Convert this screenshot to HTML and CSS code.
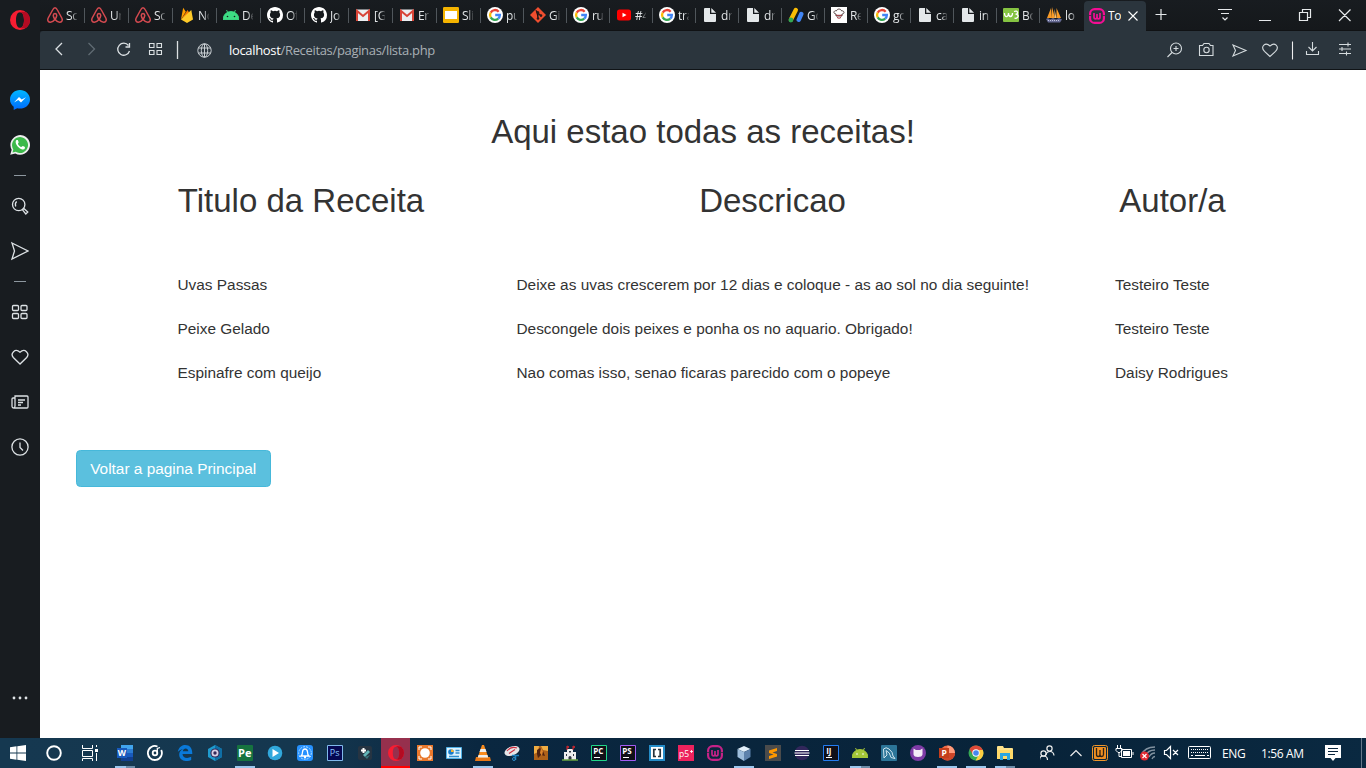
FILE: index.html
```html
<!DOCTYPE html>
<html lang="pt">
<head>
<meta charset="utf-8">
<title>Todas as receitas</title>
<link rel="stylesheet" href="styles.css">
</head>
<body>
<svg class="defs" aria-hidden="true">
  <symbol id="airbnb" viewBox="0 0 16 16"><path d="M8 .8C6.700.8 6.200 1.800 5.600 3L1.200 11c-1.200 2.500.2 4.200 2.200 4.200 1.700 0 3.500-1.400 4.600-2.900 2-2.300 2.600-5.500 0-5.700-2.600.2-2 3.400 0 5.700 1.100 1.500 2.900 2.900 4.600 2.900 2 0 3.400-1.700 2.200-4.200L10.400 3C9.800 1.800 9.300.8 8 .8z" fill="none" stroke="#d44a50" stroke-width="1.500"/></symbol>
  <symbol id="firebase" viewBox="0 0 16 16"><path d="M2 12.500L4.200.8l2.600 4z" fill="#ffa000"/><path d="M2 12.500L8.600 3l2 3.500z" fill="#f57c00"/><path d="M2 12.500L12.300 3 14 12.500 8 16z" fill="#ffca28"/></symbol>
  <symbol id="android" viewBox="0 0 16 16"><path d="M0 12.500a8 8 0 0 1 16 0zM3.500 3l2 4M12.500 3l-2 4" fill="#3ddc84" stroke="#3ddc84" stroke-width=".9"/><circle cx="4.500" cy="9.500" r=".8" fill="#16191d"/><circle cx="11.500" cy="9.500" r=".8" fill="#16191d"/></symbol>
  <symbol id="github" viewBox="0 0 16 16"><path fill="#fff" d="M8 0C3.580 0 0 3.580 0 8c0 3.540 2.290 6.530 5.470 7.590.4.070.55-.17.55-.38 0-.19-.01-.82-.01-1.490-2.010.37-2.530-.49-2.690-.94-.09-.23-.48-.94-.82-1.130-.28-.15-.68-.52-.01-.53.630-.01 1.080.58 1.230.82.720 1.210 1.870.87 2.330.66.070-.52.280-.87.510-1.070-1.780-.2-3.640-.89-3.640-3.950 0-.87.310-1.590.82-2.150-.08-.2-.36-1.020.08-2.120 0 0 .67-.21 2.200.82a7.600 7.600 0 0 1 4 0c1.530-1.040 2.200-.82 2.200-.82.440 1.100.16 1.920.08 2.120.51.56.82 1.270.82 2.150 0 3.070-1.870 3.750-3.650 3.950.29.25.54.73.54 1.480 0 1.070-.01 1.930-.01 2.200 0 .21.15.46.55.38A8 8 0 0 0 16 8c0-4.420-3.580-8-8-8z"/></symbol>
  <symbol id="gmail" viewBox="0 0 16 16"><path d="M1 2.500h14v11.500H1z" fill="#eceff1"/><path d="M2 14V4l6 5 6-5v10" fill="none" stroke="#d84437" stroke-width="2"/></symbol>
  <symbol id="slides" viewBox="0 0 16 16"><rect width="16" height="16" rx="1.200" fill="#f5b400"/><path d="M2 4h12v8H2z" fill="#fff"/></symbol>
  <symbol id="google" viewBox="0 0 16 16"><circle cx="8" cy="8" r="8" fill="#fff"/><g fill="none" stroke-width="2.300"><path d="M11.700 4.700A4.900 4.900 0 0 0 3.700 5.600" stroke="#ea4335"/><path d="M3.700 5.600a4.900 4.900 0 0 0 0 4.800" stroke="#fbbc05"/><path d="M3.700 10.400a4.900 4.900 0 0 0 7.500 1.300" stroke="#34a853"/><path d="M11.200 11.700A4.900 4.900 0 0 0 12.900 8H8.200" stroke="#4285f4"/></g></symbol>
  <symbol id="git" viewBox="0 0 16 16"><path d="M8 0l8 8-8 8-8-8z" fill="#f04e2f"/><path d="M5.800 3.400L8 5.600V12M8 6l3 3" stroke="#291a1a" stroke-width="1.200"/><circle cx="8" cy="5.600" r="1.300" fill="#291a1a"/><circle cx="8" cy="11.500" r="1.300" fill="#291a1a"/><circle cx="11" cy="8.600" r="1.300" fill="#291a1a"/></symbol>
  <symbol id="youtube" viewBox="0 0 16 16"><rect x="1" y="2.500" width="14" height="11" rx="2.500" fill="#f00"/><path d="M6.500 5.700v4.600L10.500 8z" fill="#fff"/></symbol>
  <symbol id="doc" viewBox="0 0 16 16"><path d="M2 2q0-1 1-1h5v6h6v7q0 1-1 1H3q-1 0-1-1zM9.300 1L14 5.700H9.300z" fill="#e4e8ea"/></symbol>
  <symbol id="ads" viewBox="0 0 16 16"><g stroke-linecap="round" stroke-width="4.400"><path d="M7.800 3L3 12.500" stroke="#fbbc04"/><path d="M13.300 7L10.700 12.800" stroke="#4285f4"/></g><circle cx="2.900" cy="13" r="2.400" fill="#34a853"/></symbol>
  <symbol id="chef" viewBox="0 0 16 16"><path d="M0 0h16v16H0z" fill="#fff"/><path d="M5 7C1.500 6.500 3 3 5.500 3.800 6 1.500 10 1.500 10.500 3.800 13.500 3.500 14 7 11 7v2H5z" fill="#fff" stroke="#4a3635" stroke-width=".9"/><path d="M5 8.300h6M6 10.500q2 1.500 4 0" fill="none" stroke="#9b3038"/></symbol>
  <symbol id="w3" viewBox="0 0 16 16"><rect y="1" width="16" height="14" rx="1" fill="#85c442"/><path d="M1.500 6q0 4 2.500 3.500Q5.500 9 5.500 6q0 3.500 2 3.500T9.500 6M11 4.500q3-1 3.500.7.300 2-2 2 3 .3 2.500 2.500-.5 2-3.500 1.500" fill="none" stroke="#fff" stroke-width="1.300"/></symbol>
  <symbol id="boat" viewBox="0 0 16 16"><path d="M5 1v10H1zM6 0l3 11H5zM10.500 1L15 11h-4.500z" fill="#f99b27"/><path d="M8.500 2l2 9h-2z" fill="#fbc070"/><path d="M0 12l2-1 2 1.500L7 11l3 1.500 3-1.500 3 1.500-2 3H2z" fill="#656991"/><path d="M2 13.500h12" stroke="#c2c4df" stroke-dasharray="1 1"/></symbol>
  <symbol id="wamp" viewBox="0 0 16 16"><rect x="1.100" y="1.100" width="13.800" height="13.800" rx="4.500" fill="none" stroke="currentColor" stroke-width="2.200"/><path d="M5 5v4q0 1.800 1.500 1.800T8 9V6v3q0 1.800 1.500 1.800T11 9V5" fill="none" stroke="currentColor" stroke-width="1.700"/><path d="M0 7.500h2.500M13.500 7.500H16" stroke="#2b353d" stroke-width=".8"/></symbol>
  <symbol id="opera" viewBox="0 0 20 20"><path fill-rule="evenodd" fill="#f71d32" d="M10 0a10 10 0 1 0 0 20 10 10 0 0 0 0-20zM10 2.200c2.700 0 4 3.500 4 7.800s-1.300 7.800-4 7.800S6 14.300 6 10s1.300-7.800 4-7.800z"/><path d="M10 2.200c3-1 5-.3 6.700.4a10 10 0 0 1 0 14.800c-1.700.9-3.700 1.400-6.700.4 2.700 0 4-3.500 4-7.800s-1.300-7.800-4-7.800z" fill="#b30b22"/></symbol>
  <symbol id="heart" viewBox="0 0 18 18"><path d="M9 16L2.300 9.500C-1 5.500 4-.3 9 4.200c5-4.500 10 1.300 6.700 5.300z"/></symbol>
  <symbol id="send" viewBox="0 0 18 18"><path d="M1 1l16 8L1 17l2.500-8z"/></symbol>
  <symbol id="grid" viewBox="0 0 18 18"><rect x="1.500" y="2.500" width="6" height="5" rx="1"/><rect x="10" y="2.500" width="6" height="5" rx="1"/><rect x="1.500" y="10.500" width="6" height="5" rx="1"/><rect x="10" y="10.500" width="6" height="5" rx="1"/></symbol>
</svg>

<div class="screen">
  <div class="browser">
    <nav class="sidebar">
      <svg class="s-logo" width="20" height="20"><use href="#opera"/></svg>
      <svg class="s-item messenger" width="20" height="20" viewBox="0 0 20 20"><defs><linearGradient id="msg" x2="0" y2="1"><stop stop-color="#00b7ff"/><stop offset="1" stop-color="#006aff"/></linearGradient></defs><path d="M10 0C4.500 0 0 4.200 0 9.500c0 3 1.400 5.500 3.700 7.200V20l3.500-1.800c5.800 1.600 12.800-2 12.800-8.700C20 4.200 15.500 0 10 0z" fill="url(#msg)"/><path d="M4 12.500L9 7l2.700 2.600L16 7.300l-5 5.300L8.300 10z" fill="#fff"/></svg>
      <svg class="s-item" width="20" height="20" viewBox="0 0 20 20"><path d="M.2 19.800l1.500-5A9.800 9.800 0 1 1 5.300 18.400z" fill="#eee"/><path d="M2.500 17.500l.8-3.100a8 8 0 1 1 2.400 2.400z" fill="#3cb94a"/><path d="M6.500 5c-2 2 0 5.500 2.300 7.500 2.700 2.300 5.200 2.700 6 .9.700-1.500-.5-1.700-1.800-2.300-.8-.3-1.200 1.300-2 .9-1.200-.5-2.500-1.800-3-3-.3-.7 1-1.300.6-2L7.800 5z" fill="#fff"/></svg>
      <i class="s-line"></i>
      <svg class="s-item line-ico" width="18" height="18" viewBox="0 0 18 18"><circle cx="7.700" cy="7.500" r="6.200"/><path d="M4.700 9.500q-1-3.500 1-5M11.500 12.800l1.300-1.300 4 3.500-2 2z"/></svg>
      <svg class="s-item line-ico" width="18" height="18"><use href="#send"/></svg>
      <i class="s-line"></i>
      <svg class="s-item line-ico" width="18" height="18"><use href="#grid"/></svg>
      <svg class="s-item line-ico" width="18" height="18"><use href="#heart"/></svg>
      <svg class="s-item line-ico" width="18" height="18" viewBox="0 0 18 18"><path d="M4 3h12q1 0 1 1v10q0 1-1 1H3q-2 0-2-2V6q0-1 1-1h2zM4 5v8q0 2-1.500 2M7 7h7M7 9.500h5M7 12h3"/></svg>
      <svg class="s-item line-ico" width="18" height="18" viewBox="0 0 18 18"><circle cx="9" cy="9" r="8.100"/><path d="M9 4.500v5l3 3"/></svg>
      <svg class="s-more" width="18" height="4"><g fill="#dfe3e6"><circle cx="3" cy="2" r="1.400"/><circle cx="9" cy="2" r="1.400"/><circle cx="15" cy="2" r="1.400"/></g></svg>
    </nav>

    <div class="main">
      <div class="tabs">
        <div class="tab wide"><svg><use href="#airbnb"/></svg><span>Sc</span></div>
        <div class="tab wide"><svg><use href="#airbnb"/></svg><span>Un</span></div>
        <div class="tab wide"><svg><use href="#airbnb"/></svg><span>Sc</span></div>
        <div class="tab wide"><svg><use href="#firebase"/></svg><span>No</span></div>
        <div class="tab wide"><svg><use href="#android"/></svg><span>De</span></div>
        <div class="tab wide"><svg><use href="#github"/></svg><span>Of</span></div>
        <div class="tab wide"><svg><use href="#github"/></svg><span>Jo</span></div>
        <div class="tab wide"><svg><use href="#gmail"/></svg><span>[G</span></div>
        <div class="tab wide"><svg><use href="#gmail"/></svg><span>Er</span></div>
        <div class="tab wide"><svg><use href="#slides"/></svg><span>Sli</span></div>
        <div class="tab"><svg><use href="#google"/></svg><span>pu</span></div>
        <div class="tab"><svg><use href="#git"/></svg><span>Gi</span></div>
        <div class="tab"><svg><use href="#google"/></svg><span>ru</span></div>
        <div class="tab"><svg><use href="#youtube"/></svg><span>#4</span></div>
        <div class="tab"><svg><use href="#google"/></svg><span>tra</span></div>
        <div class="tab"><svg><use href="#doc"/></svg><span>dr</span></div>
        <div class="tab"><svg><use href="#doc"/></svg><span>dr</span></div>
        <div class="tab"><svg><use href="#ads"/></svg><span>Go</span></div>
        <div class="tab"><svg><use href="#chef"/></svg><span>Re</span></div>
        <div class="tab"><svg><use href="#google"/></svg><span>go</span></div>
        <div class="tab"><svg><use href="#doc"/></svg><span>ca</span></div>
        <div class="tab"><svg><use href="#doc"/></svg><span>in</span></div>
        <div class="tab"><svg><use href="#w3"/></svg><span>Bo</span></div>
        <div class="tab wide last"><svg><use href="#boat"/></svg><span>lo</span></div>
        <div class="tab active"><svg class="pink"><use href="#wamp"/></svg><span>To</span><svg class="close" viewBox="0 0 10 10"><path d="M.5.5l9 9m0-9l-9 9" stroke="#fff" stroke-width="1.100"/></svg></div>
        <svg class="controls" width="219" height="30" viewBox="0 0 219 30"><g fill="none" stroke="#e6e9eb" stroke-width="1.200"><path d="M9.500 14.500h11M15 9v11M72 9.500h14M75 13.500h8M76.500 17.500l2.500 2.500 2.500-2.500M113 20.500h12M153.500 12.500h8v8h-8zM156.500 12v-2.500h8v8h-3M193 9.500l11.500 11.500m0-11.500L193 21"/></g></svg>
      </div>

      <div class="toolbar">
        <svg class="nav" width="145" height="38" viewBox="0 0 145 38"><g fill="none" stroke="#dbe0e3" stroke-width="1.300"><path d="M22 12l-6 6 6 6"/><path d="M48.500 12l6 6-6 6" stroke="#606b73"/><path d="M88.500 14.500a6 6 0 1 0 1 5.500M89.500 12v4h-4"/><path d="M109.500 12.500h4.500v4h-4.500zM117 12.500h4.500v4H117zM109.500 19.500h4.500v4h-4.500zM117 19.500h4.500v4H117z" stroke-width="1.100"/><path d="M137.500 10v18"/></g></svg>
        <svg class="globe" width="15" height="15" viewBox="0 0 15 15"><g fill="none" stroke="#c9cfd3"><circle cx="7.500" cy="7.500" r="6.700"/><ellipse cx="7.500" cy="7.500" rx="3.200" ry="6.700"/><path d="M7.500 1v13M1.500 5h12M1.500 10h12"/></g></svg>
        <div class="url"><b>localhost</b>/Receitas/paginas/lista.php</div>
        <svg class="tools" width="196" height="38" viewBox="0 0 196 38"><g fill="none" stroke="#d5dbde" stroke-width="1.100"><circle cx="15" cy="17.500" r="5.500"/><path d="M11 21.500L6.500 26M12.500 17.500h5M15 15v5M38.500 14.500h3l1.500-2h5l1.500 2h2.500v10H38.500z"/><circle cx="45.500" cy="19" r="2.700"/><path d="M72 14l13 5.500L72 25l2.500-5.500z"/><path d="M109 25.500l-5.500-5.200c-4.500-4.800.9-9.800 5.500-5.300 4.600-4.500 10 .5 5.500 5.300z"/><path d="M131.500 10.500v18" stroke="#eee"/><path d="M151.500 11v9M147.500 16l4 4 4-4M145.500 20v3.500h12V20M178 13.500h12M178 18h12M178 22.500h12M187 11.500v4M181 16v4M185.500 20.500v4"/></g></svg>
      </div>

      <main class="page">
        <h1>Aqui estao todas as receitas!</h1>
        <div class="recipes heads">
          <h2>Titulo da Receita</h2><h2>Descricao</h2><h2>Autor/a</h2>
        </div>
        <div class="recipes rows">
          <p>Uvas Passas</p><p>Deixe as uvas crescerem por 12 dias e coloque - as ao sol no dia seguinte!</p><p>Testeiro Teste</p>
          <p>Peixe Gelado</p><p>Descongele dois peixes e ponha os no aquario. Obrigado!</p><p>Testeiro Teste</p>
          <p>Espinafre com queijo</p><p>Nao comas isso, senao ficaras parecido com o popeye</p><p>Daisy Rodrigues</p>
        </div>
        <a class="btn">Voltar a pagina Principal</a>
      </main>
    </div>
  </div>

  <footer class="taskbar">
    <div class="t big"><svg viewBox="0 0 16 16"><path fill="#fff" d="M0 2.300L6.500 1.300v6.200H0zM7.300 1.200L16 0v7.500H7.300zM0 8.400h6.500v6.300L0 13.800zM7.300 8.400H16V16l-8.700-1.200z"/></svg></div>
    <div class="t big"><svg viewBox="0 0 16 16"><circle cx="8" cy="8" r="6.800" fill="none" stroke="#fff" stroke-width="1.900"/></svg></div>
    <div class="t big"><svg viewBox="0 0 16 16"><path d="M.5 0v3.500h10V0M.5 5.500h10v6H.5zM.5 16v-2.500h10V16M14.500 0v2M14.500 8v8" fill="none" stroke="#fff"/><path d="M13 4h3v3h-3z" fill="#fff"/></svg></div>
    <div class="t run stack gap"><svg viewBox="0 0 16 16"><path d="M4 0h12v5H4z" fill="#41a5ee"/><path d="M4 4h12v4H4z" fill="#2b7cd3"/><path d="M4 8h12v4H4z" fill="#185abd"/><path d="M4 12h12v4H4z" fill="#103f91"/><path d="M0 3h10v10H0z" fill="#185abd"/><text x=".7" y="11" class="g" font-size="8.500">W</text></svg></div>
    <div class="t"><svg viewBox="0 0 16 16"><g fill="none" stroke="#fff" stroke-width="1.800"><path d="M10.500 1.500A7 7 0 1 0 14.200 5"/><circle cx="8" cy="8" r="2.300"/><path d="M10.300 8V3.500l2.700-1" stroke-width="1.300"/></g></svg></div>
    <div class="t"><svg viewBox="0 0 16 16"><path fill="#0a79d8" d="M.8 7C2 1.500 5.500 0 8.300 0 13 0 15.500 3.500 15.300 9H5.500c.2 4.500 5.500 4.600 8.700 2.800V15c-5 2.400-12 .7-12-5.500C2.200 6.800 3.700 5 6 4.200 3.500 4.500 2 5.500.8 7zm5-.8h5.500c-.2-3.500-5-3.500-5.500 0z"/></svg></div>
    <div class="t"><svg viewBox="0 0 16 16"><path d="M8 0l7 4v8l-7 4-7-4V4z" fill="#1f9bcf"/><path d="M8 0l7 4v8l-7 4z" fill="#0f6fa6"/><circle cx="8" cy="8" r="4.600" fill="#34285a"/><circle cx="8" cy="8" r="2.600" fill="#34285a" stroke="#d7cfe5" stroke-width="1.800"/></svg></div>
    <div class="t run"><svg viewBox="0 0 16 16"><rect width="16" height="16" rx="1" fill="#16733f"/><text x="1" y="12" class="g" font-size="11">Pe</text></svg></div>
    <div class="t"><svg viewBox="0 0 16 16"><circle cx="8" cy="8" r="7.300" fill="#31a8dc"/><path d="M5.500 4l6.500 4-6.500 4z" fill="#fff"/></svg></div>
    <div class="t"><svg viewBox="0 0 16 16"><rect width="16" height="16" rx="3" fill="#2691ff"/><circle cx="8" cy="8" r="6.300" fill="none" stroke="#b8e2ff" stroke-dasharray="2 1"/><path d="M4 11q1.500-1 1.500-4 .3-3 2.500-3t2.500 3q0 3 1.500 4zM7 12.500h2" fill="none" stroke="#fff" stroke-width="1.300"/></svg></div>
    <div class="t"><svg viewBox="0 0 16 16"><path d="M.5.5h15v15H.5z" fill="#060853" stroke="#80b9ec"/><text x="2.800" y="11.300" font-size="9" fill="#8ccaff">Ps</text></svg></div>
    <div class="t"><svg viewBox="0 0 16 16"><rect x="1" y="1" width="14" height="14" rx="2" fill="#263442"/><path d="M6 10l5-5 2 2-5 5z" fill="#62b4b7"/><path d="M6.500 3v5M4 5.500h5" stroke="#fff" stroke-width="2"/><path d="M8 12l2 2 3-4" fill="#38757b"/></svg></div>
    <div class="t focused"><svg><use href="#opera"/></svg></div>
    <div class="t n"><svg viewBox="0 0 16 16"><path d="M0 0h16v16H0z" fill="#e9782c"/><circle cx="8" cy="8" r="4.800" fill="#fff"/><path d="M2 5V2h3M11 2h3v3M14 11v3h-3M5 14H2v-3" fill="none" stroke="#fff"/></svg></div>
    <div class="t n"><svg viewBox="0 0 16 16"><path d="M.5 2.500h15v11H.5z" fill="#ddf3ff" stroke="#50b1e6"/><circle cx="5" cy="7" r="2.800" fill="#187ccb"/><path d="M5 7V4.200A2.800 2.800 0 0 1 7.800 7z" fill="#f6b435"/><path d="M9.500 5.500h4M9.500 8h4M3 11.500h10" stroke="#308dcc" stroke-width="1.300"/></svg></div>
    <div class="t n run"><svg viewBox="0 0 16 16"><path d="M1 12h14l1 4H0z" fill="#e87817"/><path d="M7 0h2l4.500 13h-11z" fill="#f88b1e"/><path d="M5.500 4h5l1 3h-7zM3.500 10h9l.7 2.500H2.800z" fill="#eee"/></svg></div>
    <div class="t n"><svg viewBox="0 0 16 16"><ellipse cx="8" cy="6" rx="7.800" ry="4.500" transform="rotate(-20 8 6)" fill="#e6e6e8"/><path d="M3 6q4-5 10-3M5 8.500l6-4" fill="none" stroke="#cf3042" stroke-width="1.200"/><path d="M8 10.500h7M11.500 10v5" stroke="#1c80bd" stroke-width="1.600"/><circle cx="10" cy="14" r="1.500" fill="none" stroke="#2d8ac6"/></svg></div>
    <div class="t n"><svg viewBox="0 0 16 16"><path d="M1 1h14v14H1z" fill="#ad6119"/><path d="M1 1h5l-1 6-4 2zM8 1h7v5l-5-1z" fill="#f0ad43"/><path d="M4 5l3-2 3 3 2 5-4-1-3 3-1-4z" fill="#50220f"/><path d="M8 3l2 3-1 5-2-3z" fill="#dc842b"/></svg></div>
    <div class="t n"><svg viewBox="0 0 16 16"><path d="M2 7h12v8H2zM5 4h6v5H5z" fill="#eee"/><path d="M5 5V1l2 1-2 1M11 5V1l2 1-2 1" stroke="#d82831"/><path d="M6.500 15v-3q1.500-2 3 0v3M4 9h1v2H4zM11 9h1v2h-1zM7 6h2v1.500H7z" fill="#303640"/><path d="M0 15h16" stroke="#69a340" stroke-width="1.500"/></svg></div>
    <div class="t n"><svg viewBox="0 0 16 16"><path d="M.5.500h15v15H.5z" fill="#101018" stroke="#21d789"/><text x="2.200" y="9" class="g" font-size="8">PC</text><path d="M3 12.500h6" stroke="#fff"/></svg></div>
    <div class="t n"><svg viewBox="0 0 16 16"><path d="M.5.500h15v15H.5z" fill="#101018" stroke="#a35cf5"/><text x="2.200" y="9" class="g" font-size="8">PS</text><path d="M3 12.500h6" stroke="#fff"/></svg></div>
    <div class="t n"><svg viewBox="0 0 16 16"><path d="M0 0h16v16H0z" fill="#258dc8"/><path d="M2 2h12v12H2z" fill="#fff"/><path d="M7 4.500H4.800v7H7M9 4.500h2.200v7H9" fill="none" stroke="#26333b" stroke-width="1.700"/></svg></div>
    <div class="t n"><svg viewBox="0 0 16 16"><path d="M0 0h16v16H0z" fill="#ed225d"/><text x="1" y="11.500" font-size="8.500" fill="#fff">p5</text><path d="M12 6.500h3M13.500 5v3" stroke="#fff" stroke-width=".8"/></svg></div>
    <div class="t n magenta"><svg><use href="#wamp"/></svg></div>
    <div class="t n run"><svg viewBox="0 0 16 16"><path d="M1.500 4L8 1l6.500 3L8 7z" fill="#e1effa"/><path d="M1.500 4L8 7v9l-6.500-4z" fill="#9dbddb"/><path d="M14.500 4L8 7v9l6.500-4z" fill="#5d82ab"/></svg></div>
    <div class="t n"><svg viewBox="0 0 16 16"><path d="M0 0h16v16H0z" fill="#4b4b4b"/><path d="M12 3v3L7.500 7.500 12 9v2.500L4 14v-3l4.500-1.500L4 8V5.500z" fill="#ff9800"/></svg></div>
    <div class="t n"><svg viewBox="0 0 16 16"><circle cx="8" cy="8" r="7.300" fill="#31275b"/><path d="M1 5.500h14M.5 8h15M1 10.500h14" stroke="#fff" stroke-width="1.200"/></svg></div>
    <div class="t n"><svg viewBox="0 0 16 16"><path d="M.5.500h15v15H.5z" fill="#101018" stroke="#247df2"/><text x="3.200" y="9" class="g" font-size="8">IJ</text><path d="M3 12.500h6" stroke="#fff"/></svg></div>
    <div class="t n run stack"><svg viewBox="0 0 16 16"><path d="M0 12.500a8 8 0 0 1 16 0zM3.500 3l2 4M12.500 3l-2 4" fill="#a4c639" stroke="#a4c639"/><circle cx="5" cy="9" r=".8" fill="#fff"/><circle cx="11" cy="9" r=".8" fill="#fff"/></svg></div>
    <div class="t n"><svg viewBox="0 0 16 16"><rect width="16" height="16" rx="1" fill="#2c7598"/><path d="M3 13L2.500 4Q5 1.500 8 4q4 3 4 7l2 2.500-4-1Q9 7 5 5.500L6 10z" fill="none" stroke="#d0e5ee"/></svg></div>
    <div class="t n"><svg viewBox="0 0 16 16"><circle cx="8" cy="8" r="8" fill="#7e3ba6"/><path d="M3.500 3.500L6 5h4l2.500-1.500v6Q12 12 8 12T3.500 9.500z" fill="#f4edf6"/></svg></div>
    <div class="t n run"><svg viewBox="0 0 16 16"><circle cx="8.500" cy="8" r="7.500" fill="#ee6b47"/><path d="M8.500.5A7.500 7.500 0 0 1 16 8H8.500z" fill="#ff9b7b"/><path d="M1 8h15a7.500 7.500 0 0 1-15 0z" fill="#cd4528"/><path d="M0 3h10v10H0z" fill="#c43e1c"/><text x="2.500" y="11" class="g" font-size="8.500">P</text></svg></div>
    <div class="t n run"><svg viewBox="0 0 16 16"><circle cx="8" cy="8" r="7.500" fill="#36a854"/><path d="M1.500 4a7.500 7.500 0 0 1 13.300 1H8L5 10z" fill="#df4938"/><path d="M14.800 5A7.500 7.500 0 0 1 7.500 15.500L11 9.500V5z" fill="#ffcd41"/><circle cx="8" cy="8" r="3.700" fill="#fff"/><circle cx="8" cy="8" r="2.800" fill="#4587ef"/></svg></div>
    <div class="t n run stack"><svg viewBox="0 0 16 16"><path d="M0 2q0-1 1-1h5l1 2h8q1 0 1 1v9H0z" fill="#ffe28a"/><path d="M0 5h16v9H0z" fill="#ffd968"/><path d="M3 15V8h10v7h-3v-4H6v4z" fill="#2ba5df"/></svg></div>
    <div class="tray">
      <svg width="180" height="30" viewBox="0 0 180 30"><g transform="translate(-8.500 0)"><g fill="none" stroke="#eee" stroke-width="1.200"><circle cx="18" cy="10.500" r="2.600"/><circle cx="12" cy="15.500" r="2.600"/><path d="M8 22q0-4 4-4t4 4M14.500 17q.5-3.500 4-3.500t4 4M39 18l5.500-5.500L50 18"/></g></g>
      <g transform="translate(52 7)"><rect x=".5" y=".5" width="15" height="15" rx="2" fill="none" stroke="#ef962b"/><rect x="2" y="2" width="12" height="12" rx="1" fill="#ef8f22"/><path d="M4.500 3v6.500q0 2 1.700 2T8 9.500V5v4.500q0 2 1.700 2t1.800-2V3" fill="none" stroke="#2b2118" stroke-width="1.300"/></g>
      <g transform="translate(-8 0)"><g fill="none" stroke="#fff"><path d="M89.500 11.500h10v8h-10zM101 14v3M85.500 7v3M88.500 7v3M84 10.500h6v2l-2 2h-2l-2-2zM87 14v4.500h2"/></g><path d="M91 13h7v5h-7z" fill="#fff"/>
      <g fill="none" stroke="#8292a0" stroke-width="1.300"><path d="M109 17Q113 9 123 9M113 18q3-6 10-6M117 19q2-4 6-4M120 21q1-2.500 3-2.500"/></g><circle cx="112.500" cy="18" r="4.500" fill="#df2932"/><path d="M110.500 16l4 4m0-4l-4 4" stroke="#fff" stroke-width="1.200"/></g>
      <path d="M124.500 12.500h2l4-4v12l-4-4h-2zM133 12l5 5m0-5l-5 5" fill="none" stroke="#fff" stroke-width="1.200"/>
      <rect x="148.500" y="8.500" width="22" height="12" rx="1" fill="none" stroke="#fff"/><path d="M151 11.500h18M151 14.500h18" stroke="#fff" stroke-dasharray="1 1"/><path d="M151 17.500h2m2 0h10m2 0h2" stroke="#fff"/></svg>
      <span class="lang">ENG</span><span class="clock">1:56 AM</span>
      <svg class="note" width="16" height="16" viewBox="0 0 16 16"><path d="M0 0h16v13h-5.500L8 16l-2.500-3H0z" fill="#fff"/><path d="M3 3.500h10M3 6.500h10M3 9.500h7" stroke="#0a253c"/></svg>
      <i class="peek"></i>
    </div>
  </footer>
</div>
</body>
</html>
```
FILE: styles.css
```css
* { box-sizing: border-box; }
body { margin: 0; font-family: "Liberation Sans", Arial, sans-serif; }
svg { display: block; flex: none; }
.defs { position: absolute; width: 0; height: 0; }
.screen { width: 1366px; height: 768px; display: flex; flex-direction: column; overflow: hidden; }
.browser { display: flex; height: 738px; }

.sidebar { width: 40px; background: #181c20; display: flex; flex-direction: column; align-items: center; padding-top: 10px; }
.s-logo { margin-bottom: 57px; }
.s-item { height: 20px; margin-bottom: 25px; }
.s-item.messenger { margin-top: 3px; }
.s-line { width: 12px; height: 1px; background: #8d979f; margin: -5px 0 20px; }
.line-ico { fill: none; stroke: #dce1e4; stroke-width: 1.3; margin-right: 1px; }
.s-more { margin-top: auto; margin-bottom: 38px; }

.main { width: 1326px; display: flex; flex-direction: column; background: #181c20; }
.tabs { height: 31px; display: flex; background: linear-gradient(#181c20, #15181b); border-bottom: 1px solid #101214; font-family: "Open Sans", "Noto Sans", sans-serif; font-size: 12px; letter-spacing: -.3px; color: #e2e5e7; }
.tab { width: 43px; height: 30px; display: flex; align-items: center; padding-left: 7px; gap: 3px; }
/* divider after each inactive tab */
.tab:not(.last):not(.active)::after { content: ""; width: 1px; height: 15px; margin: 0 -1px 0 auto; background: #50565b; }
.tab.wide { width: 44px; }
.tab > svg { width: 16px; height: 16px; }
.tab span { width: 11px; overflow: hidden; white-space: nowrap; -webkit-mask-image: linear-gradient(90deg, #000 50%, rgba(0,0,0,.15)); }
.tab.active { width: 62px; height: 31px; margin: 1px 0 0 1px; padding: 0 0 2px 5px; background: #2b353d; border-radius: 4px 4px 0 0; }
.tab.active span { width: 13px; color: #fff; -webkit-mask-image: none; }
.tab.active .close { width: 10px; height: 10px; margin-left: 4px; }
.pink { color: #f40d94; }

.toolbar { height: 39px; background: #2b353d; border-bottom: 1px solid #101417; border-radius: 3px 0 0 0; display: flex; align-items: center; }
.globe { margin-left: 12px; }
.url { margin-left: 17px; font-family: "Open Sans", "Noto Sans", sans-serif; font-size: 13px; letter-spacing: -.33px; color: #a9b0b5; white-space: nowrap; }
.url b { font-weight: 400; color: #fff; }
.tools { margin-left: auto; margin-right: 9px; }

.page { flex: 1; background: #fff; color: #333; padding-top: 44px; }
h1, h2 { margin: 0; font-size: 33px; line-height: 36px; font-weight: 500; white-space: nowrap; }
h1 { text-align: center; }
.recipes { display: grid; padding-left: 137.5px; }
.heads { margin-top: 33px; justify-items: center; column-gap: 91px; grid-template-columns: 247px 514px 104px; }
.rows { margin-top: 55px; row-gap: 22px; grid-template-columns: 339px 598.5px 120px; }
.rows p { margin: 0; font-size: 15.4px; line-height: 22px; white-space: nowrap; }
.btn { display: inline-block; margin: 66px 0 0 36px; padding: 6.6px 13.2px; width: 195px; height: 37px; border: 1px solid #46b8da; border-radius: 4.4px; background: #5bc0de; color: #fff; font-size: 15.4px; line-height: 22px; white-space: nowrap; }

.taskbar { height: 30px; display: flex; background: linear-gradient(90deg, #153850, #15374f 22%, #0a2740 35%, #082339 75%, #0a2941); }
.taskbar text { font-family: "Open Sans", sans-serif; }
.g { fill: #fff; font-weight: 700; }
.t { width: 30px; display: flex; align-items: center; justify-content: center; }
.t.big { width: 36px; }
.t.gap { margin-left: 2px; }
.t.n, .t.focused { width: 29px; }
.t > svg { width: 16px; height: 16px; }
.run { background: linear-gradient(#9ac6ed, #9ac6ed) center bottom / 20px 2px no-repeat; }
.run.stack { background-image: linear-gradient(90deg, #9ac6ed 55%, #6c8ca8 55%); }
.focused { background: #96304d; border-bottom: 2px solid #f00; margin-left: 1px; }
.focused > svg { margin-top: 2px; }
.magenta { color: #c52287; }
.tray { margin-left: auto; width: 326px; display: flex; align-items: center; color: #fff; font: 12px "Open Sans", "Noto Sans", sans-serif; }
.lang { width: 39px; margin-left: 2px; letter-spacing: -.4px; }
.clock { width: 64px; letter-spacing: -.35px; white-space: nowrap; }
.peek { width: 1px; height: 30px; background: #64788a; margin-left: 20px; }
```
